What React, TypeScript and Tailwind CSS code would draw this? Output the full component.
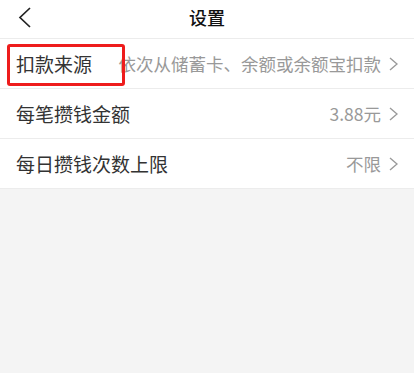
import React from "react";

const font = { fontFamily: '"Noto Sans CJK SC", "Noto Sans", sans-serif' };

function Chevron() {
  return (
    <svg width="9" height="14" viewBox="0 0 9 14" className="shrink-0 ml-[8px]">
      <polyline points="1,1 8,7 1,13" fill="none" stroke="#9a9a9a" strokeWidth="1.4" />
    </svg>
  );
}

function Row({ label, value, highlight }: { label: string; value: string; highlight?: boolean }) {
  return (
    <div className="relative flex items-center h-[50px] border-b border-[#ececec] pl-[16px] pr-[16px] bg-white">
      <span className="text-[19px] text-[#333333] shrink-0 leading-none">{label}</span>
      <div className="flex-1 flex items-center justify-end min-w-0">
        <span className="text-[17.5px] text-[#999999] whitespace-nowrap leading-none">{value}</span>
        <Chevron />
      </div>
      {highlight && (
        <div className="absolute left-[7px] top-[5px] w-[118px] h-[42px] border-[3px] border-[#ee1c1c] rounded-[3px]" />
      )}
    </div>
  );
}

export default function App() {
  return (
    <div className="w-[414px] h-[373px] bg-[#f4f4f4] overflow-hidden" style={font}>
      <div className="relative h-[39px] bg-white border-b border-[#ececec] flex items-center justify-center">
        <svg width="14" height="21" viewBox="0 0 14 21" className="absolute left-[18px] top-[7px]">
          <polyline points="12,1 2,10.5 12,20" fill="none" stroke="#222222" strokeWidth="1.7" />
        </svg>
        <span className="text-[18px] font-medium text-[#111111] leading-none -mt-[4px]">设置</span>
      </div>
      <Row label="扣款来源" value="依次从储蓄卡、余额或余额宝扣款" highlight />
      <Row label="每笔攒钱金额" value="3.88元" />
      <Row label="每日攒钱次数上限" value="不限" />
    </div>
  );
}
